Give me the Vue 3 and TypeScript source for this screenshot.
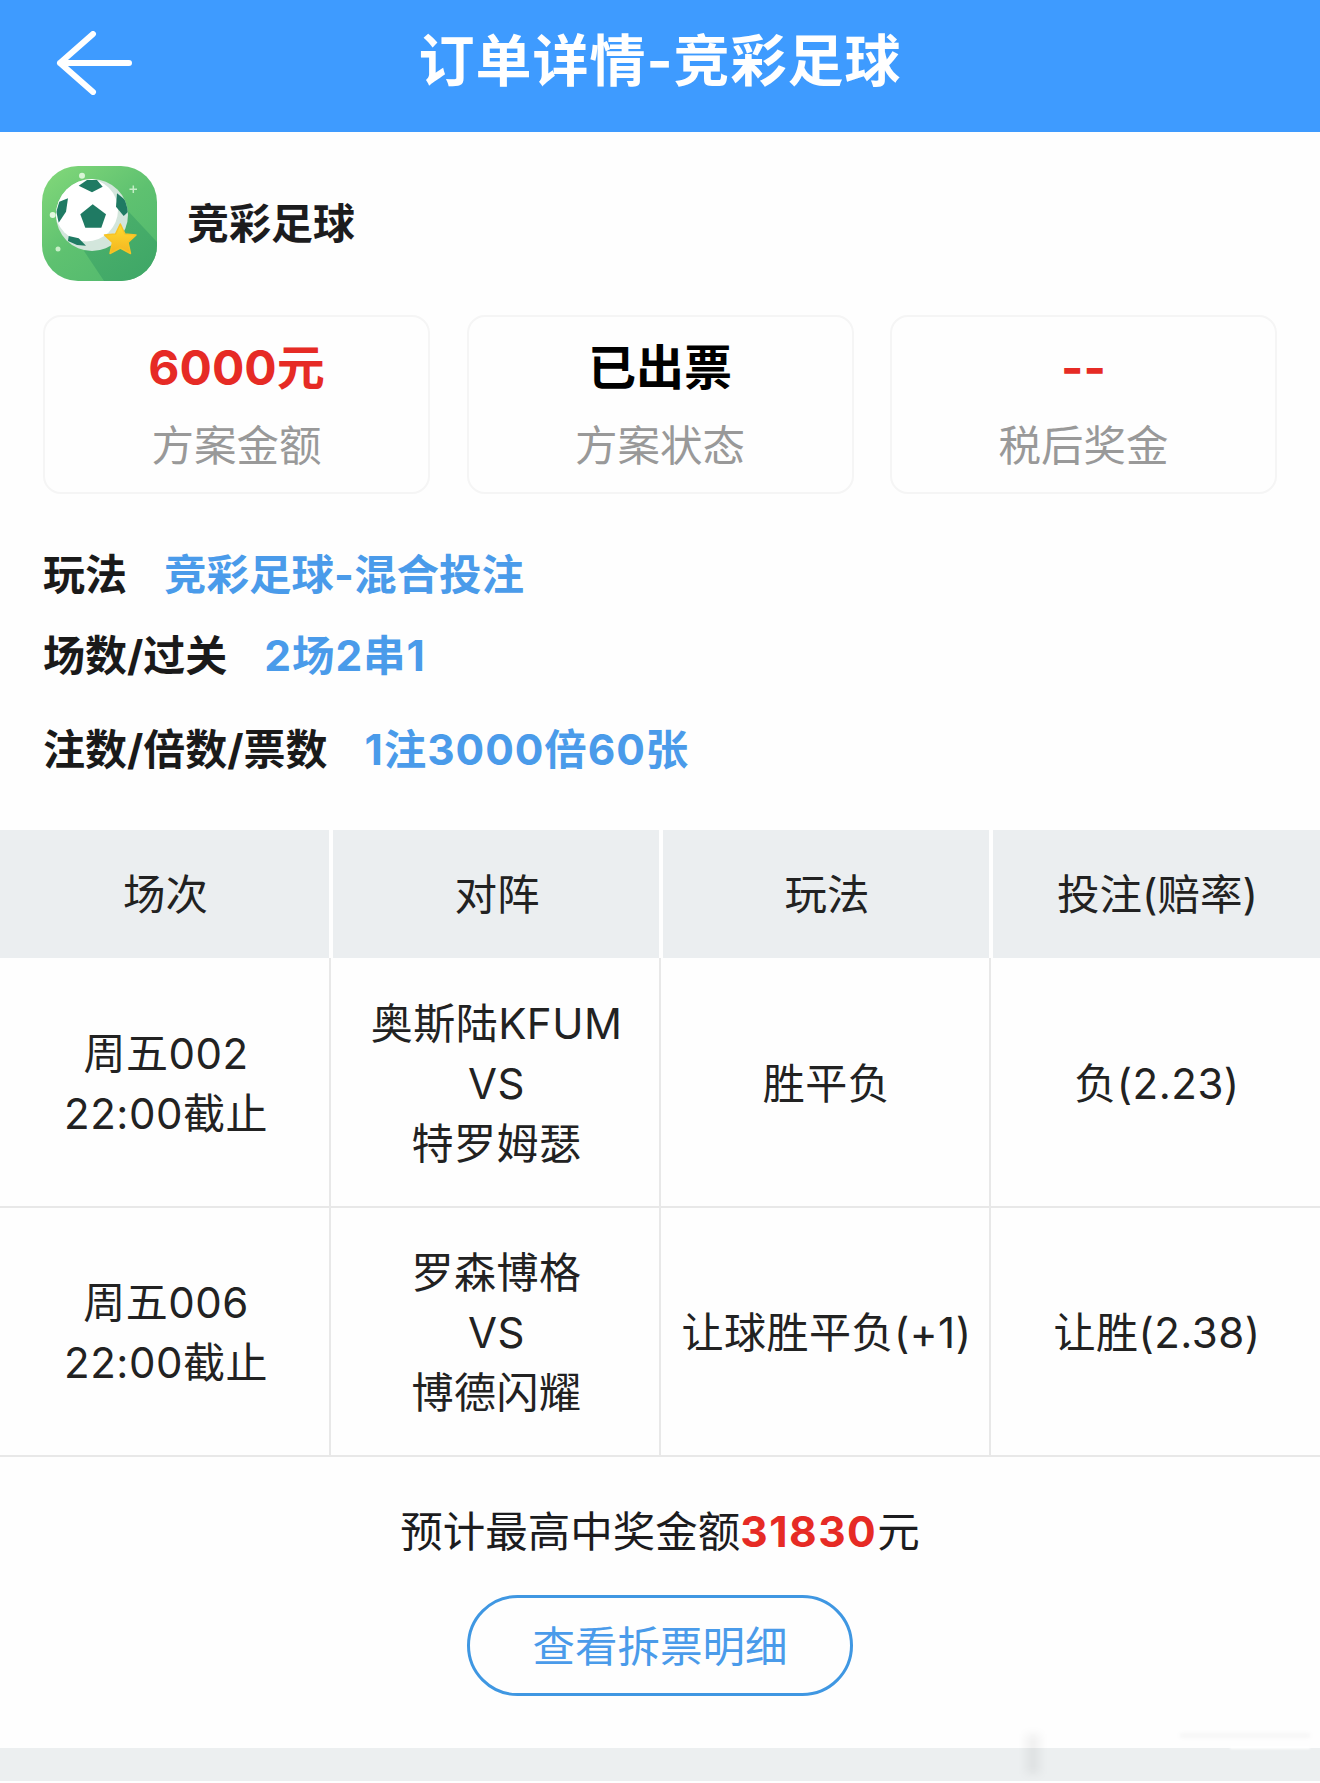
<script setup lang="ts">
interface Card { value: string; label: string; tone: string }
interface Meta { label: string; value: string; cls: string }
interface Row { time: string[]; match: string[]; play: string; bet: string }

const cards: Card[] = [
  { value: '6000元', label: '方案金额', tone: 'red' },
  { value: '已出票', label: '方案状态', tone: 'black' },
  { value: '--', label: '税后奖金', tone: 'red' },
]
const metas: Meta[] = [
  { label: '玩法', value: '竞彩足球-混合投注', cls: 'm1' },
  { label: '场数/过关', value: '2场2串1', cls: 'm2' },
  { label: '注数/倍数/票数', value: '1注3000倍60张', cls: 'm3' },
]
const heads = ['场次', '对阵', '玩法', '投注(赔率)']
const rows: Row[] = [
  { time: ['周五002', '22:00截止'], match: ['奥斯陆KFUM', 'VS', '特罗姆瑟'], play: '胜平负', bet: '负(2.23)' },
  { time: ['周五006', '22:00截止'], match: ['罗森博格', 'VS', '博德闪耀'], play: '让球胜平负(+1)', bet: '让胜(2.38)' },
]
</script>

<template>
  <div class="page">
    <header class="bar">
      <svg class="back" width="76" height="64" viewBox="0 0 76 64" fill="none">
        <path d="M37 3 L4 32 L37 61 M4 32 H73" stroke="#fff" stroke-width="6" stroke-linecap="round" stroke-linejoin="round" />
      </svg>
      <h1 class="title">订单详情-竞彩足球</h1>
      <span></span>
    </header>

    <section class="brand">
      <svg class="logo" width="115" height="115" viewBox="0 0 115 115">
        <defs>
          <linearGradient id="bg" x1="0" y1="0" x2="0.8" y2="1">
            <stop offset="0" stop-color="#84d97a" />
            <stop offset="0.55" stop-color="#5ec170" />
            <stop offset="1" stop-color="#52b96e" />
          </linearGradient>
          <linearGradient id="shade" x1="0.2" y1="0.1" x2="0.9" y2="0.9">
            <stop offset="0" stop-color="#4bb06b" />
            <stop offset="1" stop-color="#3fa767" />
          </linearGradient>
          <linearGradient id="star" x1="0" y1="0" x2="0" y2="1">
            <stop offset="0" stop-color="#ffdc2e" />
            <stop offset="1" stop-color="#f4b522" />
          </linearGradient>
          <clipPath id="round"><rect width="115" height="115" rx="36" /></clipPath>
          <clipPath id="ball"><circle cx="50" cy="49" r="36" /></clipPath>
        </defs>
        <g clip-path="url(#round)">
          <rect width="115" height="115" fill="url(#bg)" />
          <path d="M42 85 L62 115 H115 V76 L87 46 Z" fill="url(#shade)" />
          <circle cx="50" cy="49" r="36" fill="#d3e6dc" />
          <g clip-path="url(#ball)">
            <circle cx="44.500" cy="44" r="31.500" fill="#fff" />
            <path d="M50.700 38.300 64 48.300 59.300 61.700H43.300L38.300 48.300Z" fill="#1f7a63" />
            <path d="M36.700 19.700 45 14H55L60.700 20.700 50 26.300Z" fill="#1f7a63" />
            <path d="M14.300 45.700 17.300 35.700 26 32.300 24 45.700 16.700 56.700Z" fill="#1f7a63" />
            <path d="M75 27.300 83.300 34 88 44 81.700 50 74 40.700Z" fill="#1f7a63" />
            <path d="M26.700 70 36.700 72.300 44 79.700 35 79 26 75Z" fill="#1f7a63" />
          </g>
          <path d="M78.300 58 83 68 94 69 86 76.500 88.500 87.500 78.300 82 68 87.500 70.500 76.500 62.500 69 73.500 68Z" fill="url(#star)" stroke="#f7c325" stroke-width="1.500" stroke-linejoin="round" />
          <circle cx="40" cy="9.700" r="3" fill="#d9f5d6" />
          <circle cx="10.700" cy="49" r="3" fill="#e3f8e0" />
          <circle cx="16" cy="83" r="2.500" fill="#c9efc9" />
          <path d="M91.300 19.500V27M87.500 23.300H95" stroke="#c4edc6" stroke-width="1.500" />
        </g>
      </svg>
      <span class="name">竞彩足球</span>
    </section>

    <section class="cards">
      <div v-for="c in cards" :key="c.label" class="card">
        <div class="value" :class="c.tone">{{ c.value }}</div>
        <div class="label">{{ c.label }}</div>
      </div>
    </section>

    <section class="metas">
      <div v-for="m in metas" :key="m.label" class="meta" :class="m.cls">
        <span class="k">{{ m.label }}</span>
        <span class="v">{{ m.value }}</span>
      </div>
    </section>

    <section class="table">
      <div class="tr thead">
        <div v-for="h in heads" :key="h" class="th">{{ h }}</div>
      </div>
      <div v-for="r in rows" :key="r.time[0]" class="tr tbody">
        <div class="td"><div v-for="t in r.time" :key="t">{{ t }}</div></div>
        <div class="td"><div v-for="t in r.match" :key="t">{{ t }}</div></div>
        <div class="td">{{ r.play }}</div>
        <div class="td">{{ r.bet }}</div>
      </div>
    </section>

    <section class="summary">
      <p class="total">预计最高中奖金额<b>31830</b>元</p>
      <button class="detail" type="button">查看拆票明细</button>
    </section>

    <footer class="band">
      <i class="smudge blot"></i>
      <i class="smudge line1"></i>
      <i class="smudge line2"></i>
    </footer>
  </div>
</template>

<style>
html, body { margin: 0; background: #fefefe; }
</style>

<style scoped>
.page {
  width: 1320px;
  height: 1783px;
  background: #fefefe;
  font-family: "Inter", "Noto Sans CJK SC", "Liberation Sans", sans-serif;
  color: #1c1c1e;
  overflow: hidden;
}
.bar {
  height: 132px;
  background: #3e9bff;
  display: grid;
  grid-template-columns: 1fr auto 1fr;
  align-items: center;
  padding: 0 0 0 56px;
  box-sizing: border-box;
}
.back { display: block; margin-top: -6px; }
.title {
  margin: -10px 0 0;
  color: #fff;
  font-size: 56px;
  font-weight: 700;
  line-height: 64px;
  letter-spacing: 1px;
  white-space: nowrap;
  transform: translateX(-28px);
}
.brand {
  display: flex;
  align-items: center;
  gap: 30px;
  padding: 34px 0 0 42px;
}
.logo { display: block; }
.name { font-size: 42px; font-weight: 700; line-height: 60px; }
.cards {
  display: grid;
  grid-template-columns: repeat(3, 387px);
  column-gap: 36.500px;
  padding: 34px 0 0 43px;
}
.card {
  height: 179px;
  box-sizing: border-box;
  border: 2px solid #f5f5f5;
  border-radius: 18px;
  padding-top: 21px;
  text-align: center;
}
.value { font-size: 48px; font-weight: 700; line-height: 60px; }
.value.red { color: #e62b25; }
.value.black { color: #000; }
.label { margin-top: 18px; font-size: 42.500px; font-weight: 400; line-height: 60px; color: #999; }
.metas { padding: 51px 0 0 43px; }
.meta { display: flex; gap: 37px; line-height: 60px; font-weight: 700; }
.m2 { margin-top: 21px; }
.m3 { margin-top: 34px; }
.k { color: #1a1a1a; font-size: 42px; }
.v { color: #4a9bea; font-size: 42.500px; }
.m2 .v, .m3 .v { letter-spacing: 0.900px; }
.table { margin-top: 50px; }
.tr { display: grid; grid-template-columns: 329px 330px 330px 331px; }
.thead { height: 128px; }
.th {
  display: flex;
  align-items: center;
  justify-content: center;
  box-sizing: border-box;
  padding: 0 0 6px 2px;
  background: #ebeef0;
  border-left: 4px solid #fefefe;
  font-size: 42.500px;
  font-weight: 400;
  color: #222;
}
.th:first-child { border-left: 0; }
.tbody { height: 249.500px; border-bottom: 2px solid #e8e8e8; box-sizing: border-box; }
.td {
  display: flex;
  flex-direction: column;
  align-items: center;
  justify-content: center;
  box-sizing: border-box;
  padding: 4px 0 0 3px;
  border-left: 2px solid #e8e8e8;
  font-size: 42px;
  font-weight: 400;
  line-height: 60px;
  letter-spacing: 0.500px;
  white-space: nowrap;
  color: #222;
}
.td:first-child { border-left: 0; }
.summary { text-align: center; padding-top: 45px; }
.total { margin: 0; font-size: 42.500px; line-height: 60px; color: #1c1c1e; }
.total b { color: #e62b25; font-weight: 700; letter-spacing: 1.500px; }
.detail {
  display: block;
  width: 386px;
  height: 101px;
  margin: 33px auto 0;
  padding: 0 0 5px;
  background: transparent;
  border: 3px solid #3f97e2;
  border-radius: 51px;
  color: #4a9bea;
  font: inherit;
  font-size: 42.500px;
}
.band { position: relative; height: 33px; margin-top: 52px; background: #eceff0; }
.smudge { position: absolute; display: block; filter: blur(4px); }
.blot { left: 1026px; top: -14px; width: 14px; height: 40px; background: rgba(0, 0, 0, 0.05); }
.line1 { left: 1180px; top: -14px; width: 130px; height: 3px; background: rgba(0, 0, 0, 0.05); filter: blur(2px); }
.line2 { left: 1230px; top: -2px; width: 80px; height: 3px; background: rgba(255, 255, 255, 0.9); filter: blur(1px); }
</style>
